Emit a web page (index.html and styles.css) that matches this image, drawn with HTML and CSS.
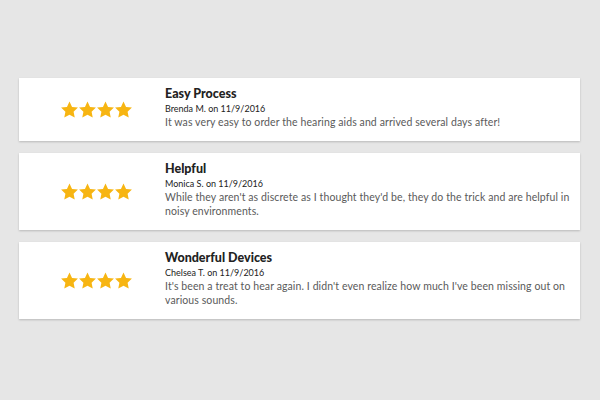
FILE: index.html
```html
<!DOCTYPE html>
<html lang="en">
<head>
  <meta charset="UTF-8" />
  <title>Reviews</title>
  <link rel="stylesheet" href="styles.css">
</head>
<body>
  <svg width="0" height="0" class="defs">
    <defs>
      <symbol id="star" viewBox="1.6 1.6 20.8 20">
        <path d="M12 1.8l3.1 6.6 7.2.9-5.3 5 1.4 7.1L12 17.9l-6.4 3.5L7 14.3l-5.3-5 7.2-.9z" fill="#f7b512"/>
      </symbol>
    </defs>
  </svg>

  <div class="reviews">
    <!-- review 1 -->
    <div class="review">
      <div class="rating">
        <svg class="star"><use href="#star"/></svg>
        <svg class="star"><use href="#star"/></svg>
        <svg class="star"><use href="#star"/></svg>
        <svg class="star"><use href="#star"/></svg>
      </div>
      <div class="review-body">
        <h3>Easy Process</h3>
        <div class="author">Brenda M. on 11/9/2016</div>
        <p>It was very easy to order the hearing aids and arrived several days after!</p>
      </div>
    </div>

    <!-- review 2 -->
    <div class="review">
      <div class="rating">
        <svg class="star"><use href="#star"/></svg>
        <svg class="star"><use href="#star"/></svg>
        <svg class="star"><use href="#star"/></svg>
        <svg class="star"><use href="#star"/></svg>
      </div>
      <div class="review-body">
        <h3>Helpful</h3>
        <div class="author">Monica S. on 11/9/2016</div>
        <p>While they aren't as discrete as I thought they'd be, they do the trick and are helpful in noisy environments.</p>
      </div>
    </div>

    <!-- review 3 -->
    <div class="review">
      <div class="rating">
        <svg class="star"><use href="#star"/></svg>
        <svg class="star"><use href="#star"/></svg>
        <svg class="star"><use href="#star"/></svg>
        <svg class="star"><use href="#star"/></svg>
      </div>
      <div class="review-body">
        <h3>Wonderful Devices</h3>
        <div class="author">Chelsea T. on 11/9/2016</div>
        <p>It's been a treat to hear again. I didn't even realize how much I've been missing out on various sounds.</p>
      </div>
    </div>
  </div>
</body>
</html>
```

FILE: styles.css
```css
body {
  margin: 0;
  font-family: Lato, "Open Sans", sans-serif;
  background: #e6e6e6;
  height: 400px;
  overflow: hidden;
}

.defs {
  position: absolute;
}

.reviews {
  padding: 78px 20px 0 19px;
}

.review {
  display: flex;
  align-items: center;
  background: #fff;
  box-shadow: 0 1px 2px rgba(0, 0, 0, 0.2);
  margin-bottom: 12px;
}

.rating {
  display: flex;
  gap: 1px;
  width: 104px;
  padding-left: 42px;
  flex-shrink: 0;
}

.star {
  width: 17px;
  height: 17px;
}

.review-body {
  padding: 9px 10px 12px 0;
}

h3 {
  margin: 0;
  font-size: 12.5px;
  line-height: 14px;
  font-weight: 900;
  color: #222;
}

.author {
  font-size: 9px;
  line-height: 13px;
  color: #222;
  margin-top: 1px;
}

p {
  margin: 0;
  font-size: 10.5px;
  line-height: 14px;
  letter-spacing: 0.1px;
  color: #5a5a5a;
}
```
